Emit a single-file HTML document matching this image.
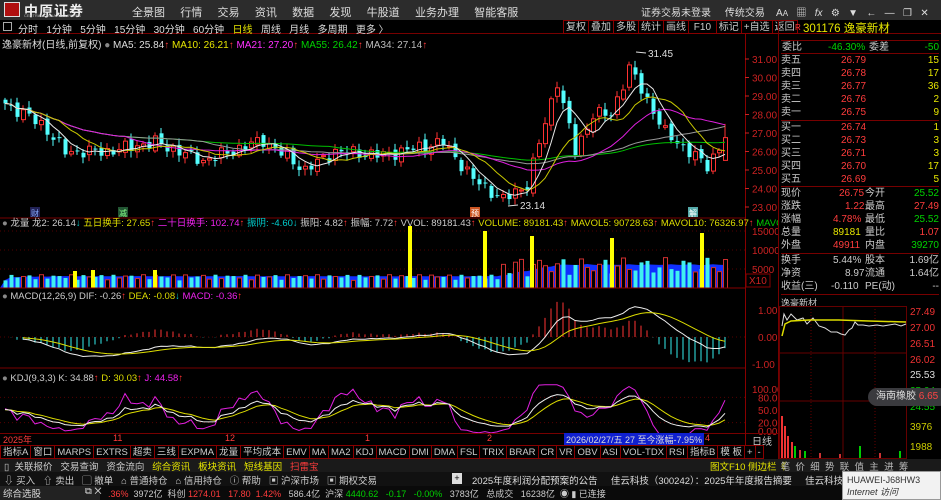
<!DOCTYPE html><html><head><meta charset="utf-8"><style>
*{margin:0;padding:0;box-sizing:border-box}
body{width:941px;height:500px;background:#000;overflow:hidden;font-family:"Liberation Sans","Noto Sans CJK SC",sans-serif;font-size:11px;color:#ccc;position:relative}
.a{position:absolute;white-space:nowrap}
.r{color:#ff3c3c}.g{color:#00d200}.y{color:#e6e600}.w{color:#ddd}.m{color:#ff30ff}.c{color:#00e0e0}
.tb span{display:inline-block;border:1px solid #800;padding:0 2px;height:14px;line-height:13px;margin-left:-1px;color:#ccc}
.rp div{position:absolute;left:0;width:158px;height:13px;line-height:13px}
.rp b{font-weight:normal;position:absolute}
</style></head><body>
<div class="a" style="left:0;top:0;width:941px;height:20px;background:#2c2c2c"></div>
<div class="a" style="left:4px;top:2px;width:16px;height:15px;background:#b01010;border:1px solid #ddd"></div>
<div class="a" style="left:24px;top:1px;font-size:14px;color:#eee;font-weight:bold;letter-spacing:1px">中原证券</div>
<div class="a" style="left:24px;top:13px;font-size:4px;color:#bbb">CENTRAL CHINA SECURITIES</div>
<div class="a" style="left:132px;top:4px;color:#ddd;font-size:11px">全景图&nbsp;&nbsp;&nbsp;&nbsp;&nbsp;行情&nbsp;&nbsp;&nbsp;&nbsp;&nbsp;交易&nbsp;&nbsp;&nbsp;&nbsp;&nbsp;资讯&nbsp;&nbsp;&nbsp;&nbsp;&nbsp;数据&nbsp;&nbsp;&nbsp;&nbsp;&nbsp;发现&nbsp;&nbsp;&nbsp;&nbsp;&nbsp;牛股道&nbsp;&nbsp;&nbsp;&nbsp;&nbsp;业务办理&nbsp;&nbsp;&nbsp;&nbsp;&nbsp;智能客服</div>
<div class="a" style="left:641px;top:4px;color:#ddd;font-size:10px">证券交易未登录&nbsp;&nbsp;&nbsp;&nbsp;&nbsp;传统交易&nbsp;&nbsp;&nbsp;&nbsp;A<span style="font-size:8px">A</span>&nbsp;&nbsp;&nbsp;▦&nbsp;&nbsp;&nbsp;<i>fx</i>&nbsp;&nbsp;&nbsp;⚙&nbsp;&nbsp;&nbsp;▼&nbsp;&nbsp;&nbsp;←&nbsp;&nbsp;&nbsp;—&nbsp;&nbsp;&nbsp;❐&nbsp;&nbsp;&nbsp;✕</div>
<div class="a" style="left:0;top:20px;width:941px;height:14px;border-bottom:1px solid #700"></div>
<div class="a" style="left:3px;top:22px;width:9px;height:9px;border:1px solid #aaa"></div>
<div class="a" style="left:18px;top:21px;color:#ddd;font-size:10px">分时&nbsp;&nbsp;&nbsp;1分钟&nbsp;&nbsp;&nbsp;5分钟&nbsp;&nbsp;&nbsp;15分钟&nbsp;&nbsp;&nbsp;30分钟&nbsp;&nbsp;&nbsp;60分钟&nbsp;&nbsp;&nbsp;<span class="y">日线</span>&nbsp;&nbsp;&nbsp;周线&nbsp;&nbsp;&nbsp;月线&nbsp;&nbsp;&nbsp;多周期&nbsp;&nbsp;&nbsp;更多 〉</div>
<div class="a tb" style="left:564px;top:20px;font-size:10px"><span>复权</span><span>叠加</span><span>多股</span><span>统计</span><span>画线</span><span>&nbsp;F10&nbsp;</span><span>标记</span><span>+自选</span><span>返回</span></div>
<div class="a" style="left:2px;top:36px;font-size:10px;color:#ddd">逸豪新材(日线,前复权) <span style="color:#888">●</span> MA5: 25.84<span class="r">↑</span> <span class="y">MA10: 26.21</span><span class="r">↑</span> <span class="m">MA21: 27.20</span><span class="r">↑</span> <span class="g">MA55: 26.42</span><span class="r">↑</span> <span style="color:#bbb">MA34: 27.14</span><span class="r">↑</span></div>
<div class="a" style="left:778px;top:20px;width:1px;height:440px;background:#700"></div>
<div class="a" style="left:745px;top:34px;width:1px;height:411px;background:#800"></div>
<div class="a rp" style="left:781px;top:22px;width:158px;height:290px;font-size:10px">
<div style="top:1px;height:15px"><b class="r" style="left:14px;font-size:8px;top:-2px">R</b><b class="y" style="left:22px;font-size:11.5px">301176 逸豪新材</b></div>
<div style="top:18px;border-top:1px solid #700;height:14px"><b style="left:1px">委比</b><b class="g" style="left:47px">-46.30%</b><b style="left:88px">委差</b><b class="g" style="right:0">-50</b></div>
<div style="top:31px;border-top:1px solid #700;height:1px"></div>
<div style="top:32px"><b>卖五</b><b class="r" style="left:60px">26.79</b><b class="y" style="right:0">15</b></div>
<div style="top:45px"><b>卖四</b><b class="r" style="left:60px">26.78</b><b class="y" style="right:0">17</b></div>
<div style="top:58px"><b>卖三</b><b class="r" style="left:60px">26.77</b><b class="y" style="right:0">36</b></div>
<div style="top:71px"><b>卖二</b><b class="r" style="left:60px">26.76</b><b class="y" style="right:0">2</b></div>
<div style="top:84px"><b>卖一</b><b class="r" style="left:60px">26.75</b><b class="y" style="right:0">9</b></div>
<div style="top:98px;border-top:1px solid #700;height:1px"></div>
<div style="top:99px"><b>买一</b><b class="r" style="left:60px">26.74</b><b class="y" style="right:0">1</b></div>
<div style="top:112px"><b>买二</b><b class="r" style="left:60px">26.73</b><b class="y" style="right:0">3</b></div>
<div style="top:125px"><b>买三</b><b class="r" style="left:60px">26.71</b><b class="y" style="right:0">3</b></div>
<div style="top:138px"><b>买四</b><b class="r" style="left:60px">26.70</b><b class="y" style="right:0">17</b></div>
<div style="top:151px"><b>买五</b><b class="r" style="left:60px">26.69</b><b class="y" style="right:0">5</b></div>
<div style="top:164px;border-top:1px solid #700;height:1px"></div>
<div style="top:165px"><b>现价</b><b class="r" style="left:58px">26.75</b><b style="left:84px">今开</b><b class="g" style="right:0">25.52</b></div>
<div style="top:178px"><b>涨跌</b><b class="r" style="left:64px">1.22</b><b style="left:84px">最高</b><b class="r" style="right:0">27.49</b></div>
<div style="top:191px"><b>涨幅</b><b class="r" style="left:52px">4.78%</b><b style="left:84px">最低</b><b class="g" style="right:0">25.52</b></div>
<div style="top:204px"><b>总量</b><b class="y" style="left:52px">89181</b><b style="left:84px">量比</b><b class="r" style="right:0">1.07</b></div>
<div style="top:217px"><b>外盘</b><b class="r" style="left:52px">49911</b><b style="left:84px">内盘</b><b class="g" style="right:0">39270</b></div>
<div style="top:231px;border-top:1px solid #700;height:1px"></div>
<div style="top:232px"><b>换手</b><b style="left:52px">5.44%</b><b style="left:84px">股本</b><b style="right:0">1.69亿</b></div>
<div style="top:245px"><b>净资</b><b style="left:64px">8.97</b><b style="left:84px">流通</b><b style="right:0">1.64亿</b></div>
<div style="top:258px"><b>收益(三)</b><b style="left:50px">-0.110</b><b style="left:84px">PE(动)</b><b style="right:0">--</b></div>
<div style="top:272px;border-top:1px solid #700;height:1px"></div>
</div>
<div class="a" style="left:781px;top:296px;font-size:9px;color:#ccc">逸豪新材</div>
<svg class="a" style="left:779px;top:306px" width="162" height="154">
<g stroke="#600" fill="none"><rect x="0.5" y="0.5" width="127" height="152"/><line x1="0" y1="47" x2="128" y2="47"/><line x1="0" y1="95" x2="128" y2="95"/><line x1="64" y1="0" x2="64" y2="153"/><line x1="32" y1="0" x2="32" y2="153" stroke-dasharray="1,2"/><line x1="96" y1="0" x2="96" y2="153" stroke-dasharray="1,2"/></g>
<polyline fill="none" stroke="#ddd" points="3,20 5,8 8,14 12,8 18,14 24,12 28,18 34,12 40,20 46,22 52,26 58,26 62,28 66,29 70,24 73,22 76,16 79,19 84,19 90,20 98,19 104,20 110,19 116,18 122,20 127,18"/>
<polyline fill="none" stroke="#dd0" stroke-width="1.5" points="3,30 6,18 12,15 30,14 60,14 90,15 127,16"/>
<g fill="#e33"><rect x="2" y="110" width="2" height="42"/><rect x="5" y="120" width="2" height="32"/><rect x="8" y="130" width="2" height="22"/><rect x="12" y="136" width="2" height="16"/></g>
<g fill="#0c0"><rect x="15" y="140" width="2" height="12"/><rect x="25" y="145" width="2" height="7"/><rect x="80" y="140" width="2" height="12"/><rect x="120" y="145" width="2" height="7"/></g>
<g fill="#c33"><rect x="20" y="144" width="2" height="8"/><rect x="40" y="147" width="2" height="5"/><rect x="60" y="148" width="2" height="4"/><rect x="100" y="147" width="2" height="5"/></g>
<g font-size="10" fill="#e33"><text x="131" y="9">27.49</text><text x="131" y="25">27.00</text><text x="131" y="41">26.51</text><text x="131" y="57">26.02</text></g>
<text x="131" y="72" font-size="10" fill="#ddd">25.53</text>
<g font-size="10" fill="#0c0"><text x="131" y="88">25.04</text><text x="131" y="104">24.55</text></g>
<g font-size="10" fill="#cc0"><text x="131" y="124">3976</text><text x="131" y="144">1988</text></g>
</svg>
<div class="a" style="left:868px;top:388px;width:80px;height:18px;background:#3a3a3e;border-radius:9px;line-height:18px;padding-left:8px;font-size:10px;color:#ddd">海南橡胶 <span style="color:#f44">6.65</span></div>
<svg id="ch" class="a" style="left:0;top:34px" width="778" height="411"></svg>
<div class="a" style="left:0;top:433px;width:778px;height:12px;border-top:1px solid #700"></div>
<div class="a r" style="left:3px;top:433px;font-size:9px">2025年</div>
<div class="a r" style="left:113px;top:433px;font-size:9px">11</div>
<div class="a r" style="left:225px;top:433px;font-size:9px">12</div>
<div class="a r" style="left:365px;top:433px;font-size:9px">1</div>
<div class="a r" style="left:487px;top:433px;font-size:9px">2</div>
<div class="a" style="left:564px;top:433px;font-size:9px;background:#1020d0;color:#ddd;padding:0 2px">2026/02/27/五 27 至今涨幅-7.95%</div>
<div class="a r" style="left:705px;top:433px;font-size:9px">4</div>
<div class="a" style="left:745px;top:433px;width:33px;height:13px;border-left:1px solid #800;font-size:10px;text-align:center">日线</div>
<div class="a tb" style="left:1px;top:445px;font-size:9.5px;height:15px"><span>指标A</span><span>窗口</span><span>MARPS</span><span>EXTRS</span><span>超卖</span><span>三线</span><span>EXPMA</span><span>龙量</span><span>平均成本</span><span>EMV</span><span>MA</span><span>MA2</span><span class="y">KDJ</span><span>MACD</span><span>DMI</span><span>DMA</span><span>FSL</span><span>TRIX</span><span>BRAR</span><span>CR</span><span>VR</span><span>OBV</span><span>ASI</span><span>VOL-TDX</span><span>RSI</span><span>WR</span><span>SAR</span><span>〉</span></div>
<div class="a tb" style="left:688px;top:445px;font-size:9.5px;background:#000"><span>指标B</span><span>模 板</span><span>+</span><span>-</span></div>
<div class="a" style="left:0;top:459px;width:941px;height:13px;background:#1a1a1a"></div>
<div class="a" style="left:4px;top:459px;font-size:9.5px;color:#ccc">▯&nbsp;&nbsp;关联报价&nbsp;&nbsp;&nbsp;交易查询&nbsp;&nbsp;&nbsp;资金流向&nbsp;&nbsp;&nbsp;<span class="y">综合资讯&nbsp;&nbsp;&nbsp;板块资讯&nbsp;&nbsp;&nbsp;短线基因</span>&nbsp;&nbsp;&nbsp;<span class="r">扫雷宝</span></div>
<div class="a y" style="left:710px;top:459px;font-size:9.5px">图文F10 侧边栏《</div>
<div class="a" style="left:778px;top:459px;font-size:9.5px;color:#bbb">&nbsp;笔 &nbsp;价&nbsp; 细&nbsp; 势&nbsp; 联&nbsp; 值&nbsp; 主&nbsp; 进&nbsp; 筹</div>
<div class="a" style="left:0;top:472px;width:941px;height:14px;background:#111"></div>
<div class="a" style="left:4px;top:473px;font-size:9.5px;color:#ccc">⇩ 买入&nbsp;&nbsp;&nbsp;⇧ 卖出&nbsp;&nbsp;&nbsp;▢ 撤单&nbsp;&nbsp;&nbsp;⌂ 普通持仓&nbsp;&nbsp;&nbsp;⌂ 信用持仓&nbsp;&nbsp;&nbsp;ⓘ 帮助&nbsp;&nbsp;&nbsp;▣ 沪深市场&nbsp;&nbsp;&nbsp;▣ 期权交易</div>
<div class="a" style="left:452px;top:473px;width:10px;height:11px;background:#ddd;color:#000;font-size:9px;text-align:center;line-height:11px">+</div>
<div class="a" style="left:472px;top:473px;font-size:9.5px;color:#ddd">2025年度利润分配预案的公告&nbsp;&nbsp;&nbsp;&nbsp;&nbsp;佳云科技（300242）：2025年年度报告摘要&nbsp;&nbsp;&nbsp;&nbsp;&nbsp;佳云科技（300</div>
<div class="a" style="left:0;top:486px;width:941px;height:14px;background:#0a0a0a"></div>
<div class="a" style="left:0;top:486px;width:100px;height:14px;background:#222;font-size:9.5px;color:#ddd;padding-left:3px">综合选股<span style="position:absolute;left:85px">⧉ ✕</span></div>
<div class="a" style="left:108px;top:487px;font-size:9px;color:#ccc"><span class="r">.36%</span>&nbsp;&nbsp;3972亿&nbsp;&nbsp;科创 <span class="r">1274.01</span>&nbsp;&nbsp;&nbsp;<span class="r">17.80&nbsp;&nbsp;1.42%</span>&nbsp;&nbsp;&nbsp;586.4亿&nbsp;&nbsp;沪深 <span class="g">4440.62</span>&nbsp;&nbsp;&nbsp;<span class="g">-0.17&nbsp;&nbsp;&nbsp;-0.00%</span>&nbsp;&nbsp;&nbsp;3783亿&nbsp;&nbsp;&nbsp;总成交&nbsp;&nbsp;&nbsp;16238亿&nbsp;&nbsp;◉ ▮ 已连接</div>
<div class="a" style="left:842px;top:471px;width:99px;height:29px;background:#f2f2f2;color:#333;font-size:9px;padding:3px 4px;border:1px solid #999">HUAWEI-J68HW3<br><i>Internet 访问</i></div>
<script>
(function(){
var s=document.getElementById('ch'),h='';
function L(x1,y1,x2,y2,c,d){h+='<line x1="'+x1+'" y1="'+y1+'" x2="'+x2+'" y2="'+y2+'" stroke="'+c+'"'+(d?' stroke-dasharray="'+d+'"':'')+'/>';}
function T(x,y,t,c,sz){h+='<text x="'+x+'" y="'+y+'" fill="'+c+'" font-size="'+(sz||10)+'">'+t+'</text>';}
var an=[[0,28.6],[6,27.5],[10,26],[17,26],[25,26.5],[33,25.5],[43,26.6],[50,25],[55,26],[63,25.8],[73,26.5],[78,24.5],[83,23.4],[87,24.2],[92,29.8],[95,26],[98,28],[101,28],[104,30.5],[107,28.8],[110,27],[114,26],[117,25.2],[120,26.75]];
var N=121,C=[],O=[],H=[],Lo=[],V=[];
function ip(i){for(var k=0;k<an.length-1;k++){if(i<=an[k+1][0]){var a=an[k],b=an[k+1];return a[1]+(b[1]-a[1])*(i-a[0])/(b[0]-a[0]);}}return 26.75;}
for(var i=0;i<N;i++){var c=ip(i)+0.28*Math.sin(i*2.3)+0.12*Math.sin(i*5.1);C.push(c);var o=i?C[i-1]+0.15*Math.sin(i*3.7):c+0.2;O.push(o);H.push(Math.max(o,c)+0.1+0.25*Math.abs(Math.sin(i*1.9)));Lo.push(Math.min(o,c)-0.1-0.25*Math.abs(Math.cos(i*2.7)));V.push(2000+1500*Math.abs(Math.sin(i*1.3))+(i>82?4500*Math.abs(Math.sin(i*0.9)):0));}
C[N-1]=26.75;O[N-1]=25.52;H[N-1]=27.49;Lo[N-1]=25.52;
function X(i){return 3+i*6;}
function Y(p){return 25+(31-p)*18.5;}
for(var p=23;p<=31;p++){T(752,Y(p)+4,p.toFixed(2),'#c22');L(745,Y(p),749,Y(p),'#c22');}
for(i=0;i<N;i++){var up=C[i]>=O[i],x=X(i),col=up?'#ff3232':'#54ffff';L(x+2,Y(H[i]),x+2,Y(Lo[i]),col);var t=Y(Math.max(O[i],C[i])),hh=Math.max(1,Math.abs(Y(O[i])-Y(C[i])));h+='<rect x="'+(x+0.5)+'" y="'+t+'" width="4" height="'+hh+'" '+(up?'fill="#000" stroke="#ff3232"':'fill="#54ffff"')+'/>';}
function MA(a,n){var r=[];for(var i=0;i<a.length;i++){var s=0,k=0;for(var j=Math.max(0,i-n+1);j<=i;j++){s+=a[j];k++;}r.push(s/k);}return r;}
function PL(arr,f,c,st){var pts=[];for(var i=st||0;i<arr.length;i++)pts.push((X(i)+2)+','+f(arr[i]).toFixed(1));h+='<polyline fill="none" stroke="'+c+'" points="'+pts.join(' ')+'"/>';}
PL(MA(C,55),Y,'#00c000');PL(MA(C,34),Y,'#999');PL(MA(C,21),Y,'#e020e0');PL(MA(C,10),Y,'#c8c800');PL(MA(C,5),Y,'#e8e8e8');
T(648,23,'31.45','#ddd');L(636,18,646,19,'#ddd');T(520,175,'23.14','#ddd');L(508,172,518,171,'#ddd');
h+='<rect x="30" y="173" width="10" height="10" fill="#225"/>';T(31,182,'财','#8af',8);h+='<rect x="118" y="173" width="10" height="10" fill="#253"/>';T(119,182,'减','#8f8',8);
h+='<rect x="470" y="173" width="10" height="10" fill="#c52"/>';T(471,182,'预','#fff',8);h+='<rect x="688" y="173" width="10" height="10" fill="#5aa"/>';T(689,182,'解','#fff',8);
L(0,184,745,184,'#700');
T(2,192,'<tspan fill="#888">●</tspan> 龙量 龙2: 26.14<tspan fill="#0cc">↓</tspan> <tspan fill="#dd0">五日换手: 27.65</tspan><tspan fill="#f33">↑</tspan> <tspan fill="#e2e">二十日换手: 102.74</tspan><tspan fill="#f33">↑</tspan> <tspan fill="#0cc">振阴: -4.60↓</tspan> 振阳: 4.82<tspan fill="#f33">↑</tspan> 振幅: 7.72<tspan fill="#f33">↑</tspan> VVOL: 89181.43<tspan fill="#f33">↑</tspan> <tspan fill="#dd0">VOLUME: 89181.43</tspan><tspan fill="#f33">↑</tspan> <tspan fill="#dd0">MAVOL5: 90728.63</tspan><tspan fill="#f33">↑</tspan> <tspan fill="#dd0">MAVOL10: 76326.97</tspan><tspan fill="#f33">↑</tspan> <tspan fill="#0c0">MAVO</tspan>','#ccc',9.5);
var vb=254;function VY(v){return vb-v*0.0038;}
[[5000,'5000'],[10000,'10000'],[15000,'15000']].forEach(function(a){T(752,VY(a[0])+4,a[1],'#c22');L(0,VY(a[0]),745,VY(a[0]),'#500','1,3');});
h+='<rect x="746" y="240" width="24" height="13" fill="none" stroke="#800"/>';T(749,250,'X10','#c22');
var mv=MA(V,10);h+='<polygon fill="#1030ff" points="0,'+vb+' '+mv.map(function(v,i){return (X(i)+2)+','+VY(v*1.05).toFixed(1)}).join(' ')+' 725,'+vb+'"/>';
var yl=[[72,17],[90,18],[101,25],[108,60],[118,55],[136,62],[145,57],[163,55]];
var ylI={};yl.forEach(function(a){ylI[Math.round((a[0]-3)/6)]=a[1];});
for(i=0;i<N;i++){var x=X(i),up=C[i]>=O[i],vy=VY(V[i]);if(ylI[i]){}}
var yy=[[73,17],[91,18],[408,62],[483,57],[530,52],[700,55],[610,50],[153,18]];
for(i=0;i<N;i++){var x=X(i),up=C[i]>=O[i],vy=VY(V[i]);h+='<rect x="'+(x+0.5)+'" y="'+vy+'" width="4" height="'+(vb-vy)+'" '+(up?'fill="#000" stroke="#d03030"':'fill="#40f0f0"')+'/>';}
yy.forEach(function(a){h+='<rect x="'+a[0]+'" y="'+(vb-a[1])+'" width="4" height="'+a[1]+'" fill="#ff0"/>';});
L(0,vb,745,vb,'#800');
function EMA(a,n){var r=[],k=2/(n+1);for(var i=0;i<a.length;i++)r.push(i?a[i]*k+r[i-1]*(1-k):a[i]);return r;}
var e1=EMA(C,12),e2=EMA(C,26),dif=e1.map(function(v,i){return v-e2[i]}),dea=EMA(dif,9);
T(2,265,'<tspan fill="#888">●</tspan> MACD(12,26,9) DIF: -0.26<tspan fill="#f33">↑</tspan> <tspan fill="#dd0">DEA: -0.08</tspan><tspan fill="#0cc">↓</tspan> <tspan fill="#e2e">MACD: -0.36</tspan><tspan fill="#f33">↑</tspan>','#ccc',9.5);
var m0=303;function MY(v){return m0-v*28;}
T(758,280,'1.00','#c22');T(758,307,'0.00','#c22');T(752,334,'-1.00','#c22');L(0,m0,745,m0,'#500','1,3');
for(i=0;i<N;i++){var mv2=2*(dif[i]-dea[i]);L(X(i)+2,m0,X(i)+2,MY(mv2),mv2>=0?'#f33':'#3ee');}
PL(dif,MY,'#eee',3);PL(dea,MY,'#dd0',3);
L(0,334,745,334,'#700');
T(2,347,'<tspan fill="#888">●</tspan> KDJ(9,3,3) K: 34.88<tspan fill="#f33">↑</tspan> <tspan fill="#dd0">D: 30.03</tspan><tspan fill="#f33">↑</tspan> <tspan fill="#e2e">J: 44.58</tspan><tspan fill="#f33">↑</tspan>','#ccc',9.5);
var K=[],D=[],J=[],k=50,d=50;for(i=0;i<N;i++){var hi=-1e9,lo=1e9;for(var j=Math.max(0,i-8);j<=i;j++){hi=Math.max(hi,H[j]);lo=Math.min(lo,Lo[j]);}var rsv=(C[i]-lo)/(hi-lo)*100;k=(2*k+rsv)/3;d=(2*d+k)/3;K.push(k);D.push(d);J.push(3*k-2*d);}
function KY(v){return 397-Math.max(-10,Math.min(110,v))*0.42;}
[[100,'100.00'],[80,'80.00'],[50,'50.00'],[20,'20.00'],[0,'0.00']].forEach(function(a){T(a[0]==100?752:758,KY(a[0])+4,a[1],'#c22');});
L(0,KY(80),745,KY(80),'#500','1,3');L(0,KY(20),745,KY(20),'#500','1,3');
PL(J,KY,'#e020e0');PL(D,KY,'#dd0');PL(K,KY,'#eee');
s.innerHTML=h;})();
</script>
</body></html>
